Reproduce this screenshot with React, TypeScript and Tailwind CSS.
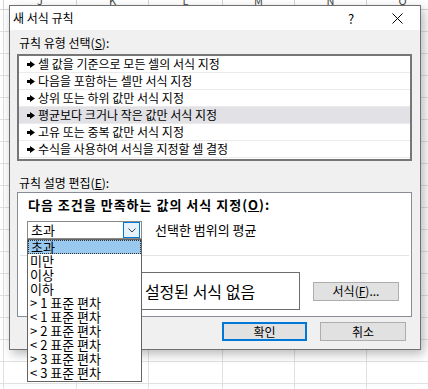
import React from "react";

const colW = [4, 73, 72, 74, 72, 72, 72];
const letters = ["", "J", "K", "L", "M", "N", "O"];
const rules = [
  "셀 값을 기준으로 모든 셀의 서식 지정",
  "다음을 포함하는 셀만 서식 지정",
  "상위 또는 하위 값만 서식 지정",
  "평균보다 크거나 작은 값만 서식 지정",
  "고유 또는 중복 값만 서식 지정",
  "수식을 사용하여 서식을 지정할 셀 결정",
];
const options = [
  "초과",
  "미만",
  "이상",
  "이하",
  "> 1 표준 편차",
  "< 1 표준 편차",
  "> 2 표준 편차",
  "< 2 표준 편차",
  "> 3 표준 편차",
  "< 3 표준 편차",
];

function Arrow() {
  return (
    <svg width="8" height="7" viewBox="0 0 8 7" className="shrink-0">
      <polygon points="0,2 3,2 3,0 8,3.5 3,7 3,5 0,5" fill="#000" />
    </svg>
  );
}

export default function App() {
  return (
    <div className="relative w-[428px] h-[389px] overflow-hidden bg-white font-['Noto_Sans_CJK_KR','Noto_Sans',sans-serif] text-black">
      {/* spreadsheet background */}
      <div className="absolute inset-0 flex flex-col mt-[-12px]">
        <div className="flex h-[22px] shrink-0">
          {colW.map((w, i) => (
            <div
              key={i}
              style={{ width: w }}
              className="shrink-0 h-full border-r border-b border-[#d5d5d5] text-center text-[11px] leading-[14px] pt-[5px] text-[#444]"
            >
              {letters[i]}
            </div>
          ))}
        </div>
        {Array.from({ length: 18 }).map((_, r) => (
          <div key={r} className="flex h-[22px] shrink-0">
            {colW.map((w, i) => (
              <div
                key={i}
                style={{ width: w }}
                className="shrink-0 h-full border-r border-b border-[#e1e1e1]"
              />
            ))}
          </div>
        ))}
      </div>

      {/* dialog */}
      <div className="absolute left-[9px] top-[5px] w-[412px] h-[345px] border border-[#6f6f6f] bg-[#f0f0f0] shadow-[3px_4px_10px_rgba(0,0,0,0.28)] flex flex-col">
        <div className="h-[24px] bg-white flex items-center shrink-0">
          <span className="pl-[3px] text-[12px] leading-[16px]">새 서식 규칙</span>
          <div className="ml-auto w-[46px] text-center text-[13px] leading-[16px] pt-[2px]">?</div>
          <div className="w-[46px] flex justify-center pt-[1px]">
            <svg width="11" height="11" viewBox="0 0 11 11">
              <path d="M0.5 0.5 L10.5 10.5 M10.5 0.5 L0.5 10.5" stroke="#000" strokeWidth="1" />
            </svg>
          </div>
        </div>

        <div className="flex flex-col pl-[7px] pr-[8px] pt-[6px]">
          <div className="h-[14px] text-[12px] leading-[14px] pl-[2px]">
            규칙 유형 선택(<span className="underline">S</span>):
          </div>
          <div className="mt-[4px] h-[107px] border-2 border-[#767676] bg-white flex flex-col">
            {rules.map((t, i) => (
              <div
                key={i}
                className={
                  "h-[17px] shrink-0 flex items-center pl-[8px] border-b border-[#ebebeb] text-[12px] leading-[14px] whitespace-nowrap " +
                  (i === 3 ? "bg-[#e1e1e6]" : "")
                }
              >
                <Arrow />
                <span className="ml-[3px]">{t}</span>
              </div>
            ))}
          </div>

          <div className="mt-[15px] h-[14px] text-[12px] leading-[14px] pl-[2px]">
            규칙 설명 편집(<span className="underline">E</span>):
          </div>
          <div className="mt-[2px] h-[125px] border border-[#878c95] bg-white flex flex-col">
            <div className="pl-[10px] pt-[4px] h-[20px] text-[13px] font-bold leading-[16px] tracking-[1px] whitespace-nowrap">
              다음 조건을 만족하는 값의 서식 지정(<span className="underline">O</span>):
            </div>
            <div className="mt-[8px] h-[18px] flex items-center pl-[9px]">
              <div className="relative w-[115px] h-[18px] border border-[#8a8a8a] bg-white flex items-start">
                <span className="pl-[3px] text-[13px] leading-[16px]">초과</span>
                <div className="ml-auto mr-[1px] w-[17px] h-[16px] border border-[#0078d7] bg-[#e5f1fb] flex items-center justify-center">
                  <svg width="8" height="5" viewBox="0 0 8 5">
                    <path d="M0.5 0.5 L4 4 L7.5 0.5" stroke="#404040" fill="none" strokeWidth="1" />
                  </svg>
                </div>
                <div className="absolute left-[-1px] top-[17px] w-[115px] h-[143px] border border-[#646464] bg-white flex flex-col z-10">
                  {options.map((o, i) => (
                    <div
                      key={i}
                      className={
                        "h-[14px] shrink-0 flex items-center pl-[2px] text-[13px] leading-[14px] whitespace-nowrap " +
                        (i === 0 ? "bg-[#99c9ef] border border-dotted border-[#333]" : "")
                      }
                    >
                      {o}
                    </div>
                  ))}
                </div>
              </div>
              <span className="ml-[13px] text-[13px] leading-[14px]">선택한 범위의 평균</span>
            </div>
            <div className="mt-[16px] h-px bg-[#e3e3e3] mx-[2px]" />
            <div className="mt-[16px] h-[38px] flex items-center">
              <div className="ml-[82px] w-[200px] h-[38px] border border-[#6d6d6d] bg-white flex items-center justify-center text-[16px] leading-[18px]">
                설정된 서식 없음
              </div>
              <div className="ml-[13px] w-[86px] h-[19px] border border-[#adadad] bg-[#e1e1e1] flex items-center justify-center text-[12px] leading-[14px]">
                서식(<span className="underline">F</span>)...
              </div>
            </div>
          </div>

          <div className="mt-[5px] flex justify-end gap-[13px] pr-[6px]">
            <div className="w-[85px] h-[19px] border-2 border-[#0078d7] bg-[#e1e1e1] flex items-center justify-center text-[12px] leading-[14px]">
              확인
            </div>
            <div className="w-[86px] h-[19px] border border-[#adadad] bg-[#e1e1e1] flex items-center justify-center text-[12px] leading-[14px]">
              취소
            </div>
          </div>
        </div>
      </div>
    </div>
  );
}
